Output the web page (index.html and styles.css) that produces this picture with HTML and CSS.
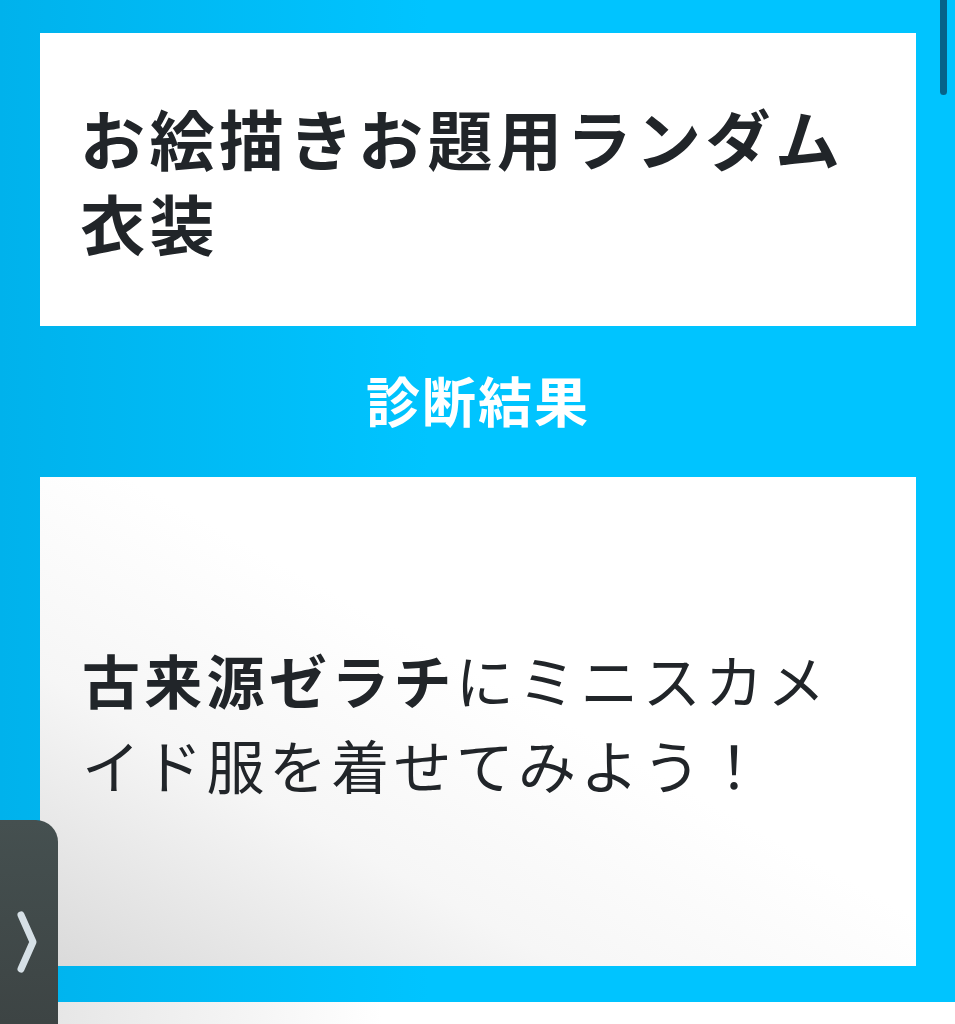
FILE: index.html
```html
<!DOCTYPE html>
<html>
<head>
<meta charset="UTF-8">
<link rel="stylesheet" href="styles.css">
<title>お絵描きお題用ランダム衣装</title>
</head>
<body>
	<div class="page">
		<div class="titleCard">
			<h1>お絵描きお題用ランダム衣装</h1>
		</div>
		<h2 class="resultHead">診断結果</h2>
		<div class="resultCard">
			<p><b>古来源ゼラチ</b>にミニスカメイド服を着せてみよう！</p>
		</div>
	</div>
	<div class="below"></div>
	<div class="scrollbar"></div>
	<div class="sideTab">
		<svg width="22" height="66" viewBox="0 0 22 66">
			<path d="M5 6 L17 33 L5 60" fill="none" stroke="#d6e0e6" stroke-width="7" stroke-linecap="round" stroke-linejoin="round"/>
		</svg>
	</div>
</body>
</html>
```
FILE: styles.css
```css
body{
	margin: 0;
	background: #ffffff;
	font-family: "Noto Sans CJK JP", "Noto Sans", sans-serif;
	color: #212529;
	overflow: hidden;
}

.page{
	background: linear-gradient(to right, #00b2ec 0%, #00c4ff 45%, #00c4ff 100%);
	padding: 33px 39px 36px 40px;
}

.titleCard{
	background: #ffffff;
	height: 293px;
	box-sizing: border-box;
	padding: 62px 40px 0 40px;
}

.titleCard h1{
	margin: 0;
	font-size: 65px;
	line-height: 85px;
	letter-spacing: 4.5px;
	font-weight: 700;
}

.resultHead{
	margin: 0;
	height: 151px;
	line-height: 148px;
	text-align: center;
	color: #ffffff;
	font-size: 54px;
	font-weight: 700;
	letter-spacing: 2px;
}

.resultCard{
	background: linear-gradient(to top right, #d9d9d9 0%, #f6f6f6 30%, #ffffff 55%);
	height: 489px;
	box-sizing: border-box;
	padding: 0 42px;
	display: flex;
	align-items: center;
}

.resultCard p{
	margin: 0;
	font-size: 58px;
	line-height: 85px;
	letter-spacing: 4.3px;
}

.resultCard b{
	font-weight: 700;
}

.below{
	height: 40px;
	background: linear-gradient(to right, #e2e2e2 0%, #ffffff 40%);
}

.scrollbar{
	position: absolute;
	top: 0;
	right: 8px;
	width: 7px;
	height: 95px;
	border-radius: 0 0 4px 4px;
	background: #05628a;
}

.sideTab{
	position: absolute;
	left: 0;
	top: 820px;
	width: 58px;
	height: 204px;
	background: linear-gradient(#455050, #3d4444);
	border-radius: 0 22px 0 0;
	display: flex;
	align-items: center;
	padding-left: 16px;
	box-sizing: border-box;
	padding-top: 40px;
}
```
